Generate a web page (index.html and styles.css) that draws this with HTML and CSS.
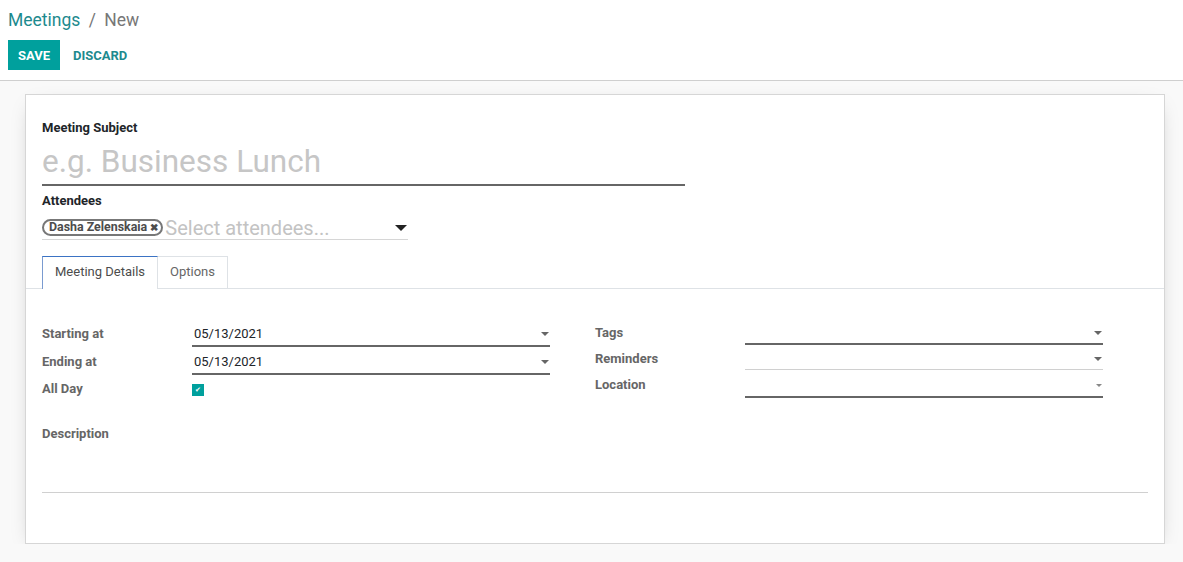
FILE: index.html
```html
<!DOCTYPE html>
<html lang="en">
<head>
    <meta charset="UTF-8">
    <title>Meetings / New</title>
    <link rel="stylesheet" href="styles.css">
</head>
<body>
    <div class="control-panel">
        <div class="breadcrumb">
            <a class="crumb-link">Meetings</a>
            <span class="crumb-sep">/</span>
            <span class="crumb-active">New</span>
        </div>
        <div class="buttons">
            <button class="btn btn-primary">Save</button>
            <button class="btn btn-link">Discard</button>
        </div>
    </div>

    <div class="content">
        <div class="sheet">
            <label class="title-label">Meeting Subject</label>
            <div class="title-input">e.g. Business Lunch</div>

            <label class="title-label attendees-label">Attendees</label>
            <div class="many2many">
                <span class="chip">Dasha Zelenskaia <span class="chip-x">&#10006;</span></span>
                <span class="m2m-placeholder">Select attendees...</span>
                <span class="caret caret-big"></span>
            </div>

            <div class="tabs">
                <div class="tab active">Meeting Details</div>
                <div class="tab">Options</div>
            </div>

            <div class="groups">
                <div class="group">
                    <div class="row row-left">
                        <div class="field-label">Starting at</div>
                        <div class="field-input strong">05/13/2021<span class="caret"></span></div>
                    </div>
                    <div class="row row-left">
                        <div class="field-label">Ending at</div>
                        <div class="field-input strong">05/13/2021<span class="caret"></span></div>
                    </div>
                    <div class="row row-left">
                        <div class="field-label">All Day</div>
                        <div><span class="checkbox">&#10004;</span></div>
                    </div>
                </div>
                <div class="group">
                    <div class="row row-right">
                        <div class="field-label">Tags</div>
                        <div class="field-input strong"><span class="caret"></span></div>
                    </div>
                    <div class="row row-right">
                        <div class="field-label">Reminders</div>
                        <div class="field-input light"><span class="caret"></span></div>
                    </div>
                    <div class="row row-right">
                        <div class="field-label">Location</div>
                        <div class="field-input strong"><span class="caret caret-small"></span></div>
                    </div>
                </div>
            </div>

            <div class="field-label desc-label">Description</div>
            <div class="desc-editor"></div>
        </div>
    </div>
</body>
</html>
```

FILE: styles.css
```css
body {
    font-family: Roboto, "Noto Sans", sans-serif;
    font-size: 13px;
    color: #212529;
    background: #f9f9f9;
    margin: 0;
}
.control-panel {
    background: #fff;
    border-bottom: 1px solid #cfcfcf;
    padding: 8px 8px 10px;
}
.breadcrumb {
    font-size: 17.5px;
    line-height: 25px;
    height: 24px;
}
.crumb-link { color: #1d8a8e; }
.crumb-sep { color: #777; margin: 0 4px; }
.crumb-active { color: #777; }
.buttons {
    display: flex;
    margin-top: 8px;
}
.btn {
    font-family: Roboto, sans-serif;
    font-size: 13px;
    font-weight: bold;
    text-transform: uppercase;
    height: 30px;
    padding: 0 10px;
    border: none;
    cursor: pointer;
}
.btn-primary {
    background: #00a09d;
    color: #fff;
}
.btn-link {
    background: none;
    color: #1d8a8e;
    padding: 0 13px;
}
.content {
    padding: 13px 18px 0 25px;
}
.sheet {
    background: #fff;
    border: 1px solid #d6d6d6;
    box-shadow: 0 6px 20px -10px rgba(0,0,0,0.35);
    padding: 23px 16px 50px;
}
.title-label {
    display: block;
    font-weight: bold;
    line-height: 20px;
    color: #212529;
}
.title-input {
    width: 643px;
    height: 44px;
    margin-top: 2px;
    font-size: 31.5px;
    line-height: 43px;
    color: #c6c6c6;
    border-bottom: 2px solid #666;
}
.attendees-label {
    margin-top: 5px;
}
.many2many {
    width: 366px;
    display: flex;
    align-items: center;
    height: 23px;
    padding-top: 5px;
    border-bottom: 1px solid #d6d6d6;
}
.chip {
    border: 2px solid #777;
    border-radius: 10px;
    padding: 0 3px 0 5px;
    font-size: 12.4px;
    font-weight: bold;
    line-height: 12px;
    color: #4c4c4c;
    white-space: nowrap;
}
.chip-x {
    font-size: 10px;
}
.m2m-placeholder {
    font-size: 20px;
    color: #c3c3c3;
    margin-left: 2px;
}
.caret {
    width: 0;
    height: 0;
    border-left: 4px solid transparent;
    border-right: 4px solid transparent;
    border-top: 4px solid #666;
    margin-left: auto;
    margin-right: 1px;
}
.caret-big {
    border-left-width: 6px;
    border-right-width: 6px;
    border-top: 6px solid #222;
}
.caret-small {
    border-left-width: 3px;
    border-right-width: 3px;
    border-top: 3px solid #888;
}
.tabs {
    display: flex;
    margin: 16px -16px 0;
    padding-left: 16px;
    border-bottom: 1px solid #dee2e6;
}
.tab {
    padding: 5px 12px 6px;
    line-height: 20px;
    color: #666;
    border: 1px solid #dee2e6;
    border-bottom: none;
    margin-right: -1px;
}
.tab.active {
    color: #4c4c4c;
    border-top-color: #3b73c4;
    border-left-color: #7a9bd0;
    background: #fff;
    margin-bottom: -1px;
    padding-bottom: 7px;
    position: relative;
    z-index: 1;
}
.groups {
    display: grid;
    grid-template-columns: 553px 553px;
    margin-top: 30px;
}
.row {
    display: grid;
    grid-template-columns: 150px 358px;
}
.row-left { height: 28px; }
.row-right { height: 26px; }
.row:last-child { height: auto; }
.field-label {
    font-weight: bold;
    color: #666;
    line-height: 20px;
    padding-top: 5px;
}
.row-right .field-label,
.row-left:last-child .field-label {
    padding-top: 4px;
}
.field-input {
    display: flex;
    align-items: center;
    line-height: 20px;
    height: 20px;
    padding-top: 4px;
    padding-left: 2px;
}
.row-left .field-input {
    margin-top: 1px;
    padding-bottom: 1px;
}
.field-input.strong { border-bottom: 2px solid #666; }
.field-input.light { border-bottom: 1px solid #d0d0d0; }
.row-right:last-child .field-input { padding-bottom: 1px; }
.checkbox {
    display: inline-block;
    width: 12px;
    height: 12px;
    margin-top: 9px;
    background: #00a09d;
    color: #fff;
    font-size: 7px;
    line-height: 12px;
    text-align: center;
}
.desc-label {
    margin-top: 20px;
}
.desc-editor {
    height: 48px;
    border-bottom: 1px solid #d0d0d0;
}
```
